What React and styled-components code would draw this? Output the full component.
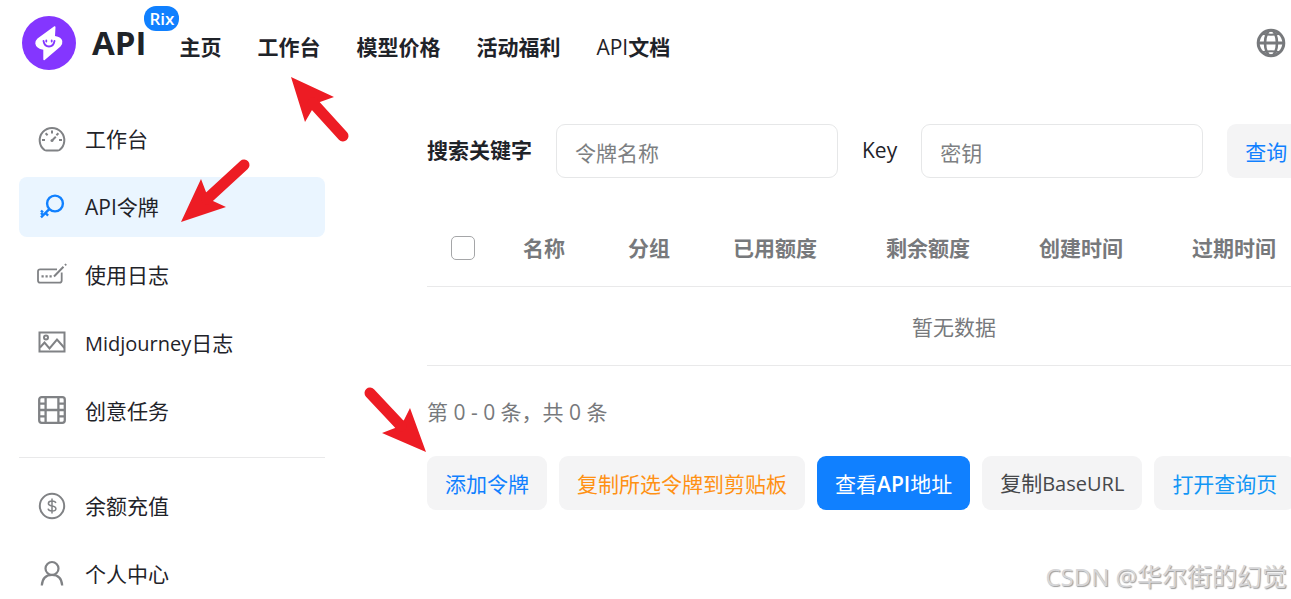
import React, { useState } from 'react'
import styled, { createGlobalStyle } from 'styled-components';

const GlobalStyle = createGlobalStyle`
    * {
        box-sizing: border-box;
    }

    body {
        margin: 0;
        background: #fff;
        color: #1f2329;
        font-family: "Open Sans", "Noto Sans CJK SC", sans-serif;
        font-size: 21px;
        line-height: 30px;
    }

    button, input {
        font: inherit;
    }
`;

const Page = styled.div`
    position: relative;
    height: 100vh;
    overflow: hidden;
`;

const Header = styled.header`
    display: flex;
    align-items: center;
    padding: 16px 5px 0 22px;
`;

const Brand = styled.a`
    position: relative;
    display: flex;
    align-items: center;
    gap: 16px;
    color: inherit;
    font-size: 33px;
    font-weight: 700;
    text-decoration: none;
`;

const Badge = styled.span`
    position: absolute;
    top: -10px;
    right: -33px;
    padding: 0 5px;
    border-radius: 12px;
    background: #1080ff;
    color: #fff;
    font-size: 17px;
    font-weight: 600;
    line-height: 25px;
`;

const Nav = styled.nav`
    display: flex;
    gap: 36px;
    flex: 1;
    padding: 8px 0 0 33px;
`;

const NavLink = styled.a`
    color: inherit;
    font-weight: 700;
    text-decoration: none;
    white-space: nowrap;
`;

const Latin = styled.span`
    font-size: ${props => props.$size || 21}px;
    font-weight: ${props => props.$weight || 400};
`;

const LangButton = styled.button`
    display: flex;
    padding: 0;
    border: 0;
    background: none;
    color: #77797c;
`;

const Body = styled.div`
    display: flex;
    gap: 102px;
    padding: 39px 0 0 19px;
`;

const Sidebar = styled.aside`
    flex: 0 0 306px;
`;

const Menu = styled.div`
    display: flex;
    flex-direction: column;
    gap: 8px;
`;

const MenuItem = styled.a`
    display: flex;
    align-items: center;
    gap: 18px;
    height: 60px;
    padding: 0 18px;
    border-radius: 8px;
    background: ${props => props.$active ? '#eaf5ff' : 'transparent'};
    color: inherit;
    text-decoration: none;

    svg {
        color: ${props => props.$active ? '#1080ff' : '#808285'};
    }
`;

const Divider = styled.hr`
    height: 1px;
    margin: 16px 0 18px;
    border: 0;
    background: #e9e9ea;
`;

const Main = styled.main`
    flex: 1;
    min-width: 0;
    padding-top: 15px;
    overflow: hidden;
`;

const SearchForm = styled.form`
    display: flex;
    align-items: center;
    gap: 24px;
    margin-bottom: 29px;
`;

const Label = styled.label`
    flex: none;
    padding-bottom: 2px;
    font-weight: ${props => props.$weight || 700};
`;

const TextInput = styled.input`
    flex: none;
    width: 282px;
    height: 54px;
    padding: 3px 18px 0;
    border: 1px solid #e6e7e8;
    border-radius: 9px;
    background: #fff;
    color: inherit;
    outline: none;

    &::placeholder {
        color: #7d7f82;
        opacity: 1;
    }
`;

const Button = styled.button`
    flex: none;
    height: 54px;
    padding: 2px 18px 0;
    border: 0;
    border-radius: 9px;
    background: ${props => props.$background || '#f4f4f5'};
    color: ${props => props.$color};
    white-space: nowrap;
`;

const Table = styled.table`
    width: 1054px;
    border-collapse: collapse;
    table-layout: fixed;
    color: #77797c;
`;

const Th = styled.th`
    width: ${props => props.$width ? props.$width + 'px' : 'auto'};
    height: 79px;
    padding: 3px 0 0 24px;
    border-bottom: 1px solid #e9e9ea;
    text-align: left;
    font-weight: 700;
`;

const Empty = styled.td`
    height: 79px;
    padding: 3px 0 0;
    border-bottom: 1px solid #e9e9ea;
    text-align: center;
`;

const Checkbox = styled.input`
    display: block;
    width: 24px;
    height: 24px;
    margin: 0;
    appearance: none;
    border: 1px solid #a5a6a8;
    border-radius: 5px;
    background: #fff;

    &:checked {
        background: #1080ff;
    }
`;

const Summary = styled.p`
    margin: 31px 0 29px;
    color: #77797c;
`;

const Actions = styled.div`
    display: flex;
    gap: 12px;
`;

const Arrow = styled.svg`
    position: absolute;
    top: ${props => props.$top}px;
    left: ${props => props.$left}px;
    overflow: visible;
    pointer-events: none;
    fill: #ed1c24;
    stroke: #ed1c24;
`;

const Watermark = styled.div`
    position: absolute;
    right: 4px;
    bottom: 6px;
    color: #d6d6d8;
    font-size: 25px;
    line-height: 32px;
    text-shadow: 1px 1px 1px #9c9c9c;
`;

function Icon(props) {
    return (
        <svg width="30" height="30" viewBox="0 0 30 30" fill="none" stroke="currentColor" strokeWidth={props.stroke || 2} aria-hidden="true">
            {props.children}
        </svg>
    )
}

function Logo() {
    return (
        <svg width="54" height="54" viewBox="0 0 54 54" aria-hidden="true">
            <circle cx="27" cy="27" r="27" fill="#8436ff" />
            <path d="M32.300 10.300 15.500 22.500Q13.300 24.500 13.300 27.500Q14 32.500 21.300 33.800L21.300 43.500Q21.700 44.700 22.700 43.900L38.500 30.500Q40.800 28 40.300 25Q39.500 21 33 20L33.500 11Q33.300 9.800 32.300 10.300Z" fill="#fff" />
            <path d="M21.500 25Q22.500 30.500 27 30.500Q31.500 30.500 32.500 25" fill="none" stroke="#8436ff" strokeWidth="1.800" strokeLinecap="round" />
            <path d="M24.300 24.500v1M29.700 24.500v1" stroke="#8436ff" strokeWidth="1.800" strokeLinecap="round" />
        </svg>
    )
}

function GaugeIcon() {
    return (
        <Icon>
            <path d="M7.500 26A12.300 12.300 0 1 1 22.500 26Q21.500 26.600 20.500 26.600H9.500Q8.500 26.600 7.500 26Z" />
            <path d="M15 6.500v3M8.600 9.200l2 2M21.400 9.200l-2 2M5 16h3M22 16h3M15.500 16l3.300-3.300" />
            <circle cx="15" cy="16.500" r="1.500" fill="currentColor" stroke="none" />
        </Icon>
    )
}

function KeyIcon() {
    return (
        <Icon stroke={2.4}>
            <circle cx="18" cy="11.500" r="7.900" />
            <path d="M12.300 17.200 4 25.400M8.500 21l2.600 2.600M6 20.500l-2-2M6.500 23.500l-2.500-2.500" />
        </Icon>
    )
}

function LogIcon() {
    return (
        <Icon stroke={1.8}>
            <path d="M20 9.300H3.200Q1 9.300 1 11.500V20.500Q1 22.700 3.200 22.700H22.500Q24.700 22.700 24.700 20.500V12.500" />
            <path d="M17 16.500 26.500 6.700M28 5.300l1.200-1.200" strokeWidth="2" />
            <path d="M4.500 16.300h2.200M8.500 16.300h2.200M12.500 16.300h2.200" strokeWidth="2.200" />
        </Icon>
    )
}

function ImageIcon() {
    return (
        <Icon>
            <path d="M2.500 4.500h25v19h-25z" />
            <circle cx="9" cy="9.500" r="2" />
            <path d="M3 19.500 7.500 14.500l5 6L20 11.500l7.500 8.500" />
        </Icon>
    )
}

function FilmIcon() {
    return (
        <Icon stroke={2.3}>
            <rect x="2.200" y="1.200" width="25.600" height="25.600" rx="2.500" />
            <path d="M8.600 1.500v25M21.400 1.500v25M8.600 14h12.800M2.500 7.600h6M2.500 14h6M2.500 20.400h6M21.400 7.600h6M21.400 14h6M21.400 20.400h6" />
        </Icon>
    )
}

function CoinIcon() {
    return (
        <Icon stroke={2}>
            <circle cx="15" cy="15" r="12.200" />
            <path d="M18.800 12Q18.400 10 15 10Q11.400 10 11.400 12.400Q11.400 14.300 15 14.900Q18.900 15.500 18.900 17.700Q18.900 20 15 20Q11.400 20 11.100 17.700M15 7.500v15" strokeWidth="1.500" />
        </Icon>
    )
}

function UserIcon() {
    return (
        <Icon stroke={2.2}>
            <circle cx="15" cy="9.500" r="6.500" />
            <path d="M4.800 26.500Q5.500 15.800 15 15.800Q24.500 15.800 25.200 26.500" />
        </Icon>
    )
}

function GlobeIcon() {
    return (
        <Icon stroke={3}>
            <circle cx="15" cy="15" r="12.800" />
            <ellipse cx="15" cy="15" rx="6" ry="12.800" strokeWidth="2.600" />
            <path d="M2 15h26" />
            <path d="M6 5.800Q15 7.500 24 5.800M6 24.200Q15 22.500 24 24.200" strokeWidth="2" />
        </Icon>
    )
}

const menu = [
    { name: '工作台', icon: <GaugeIcon /> },
    { name: 'API令牌', icon: <KeyIcon /> },
    { name: '使用日志', icon: <LogIcon /> },
    { name: '日志', prefix: 'Midjourney', icon: <ImageIcon /> },
    { name: '创意任务', icon: <FilmIcon /> }
]

const accountMenu = [
    { name: '余额充值', icon: <CoinIcon /> },
    { name: '个人中心', icon: <UserIcon /> }
]

const columns = [
    { name: '名称', width: 105 },
    { name: '分组', width: 105 },
    { name: '已用额度', width: 153 },
    { name: '剩余额度', width: 153 },
    { name: '创建时间', width: 153 },
    { name: '过期时间' }
]

function App() {

    const [active, setActive] = useState('API令牌')
    const [all, setAll] = useState(false)

    function getItems(items) {
        return items.map(item => (
            <MenuItem href="#" key={item.name} $active={item.name === active} onClick={() => setActive(item.name)}>
                {item.icon}
                <span>{item.prefix && <Latin $size={20}>{item.prefix}</Latin>}{item.name}</span>
            </MenuItem>
        ))
    }

    return (
        <Page lang="zh-CN">
            <GlobalStyle />
            <Header>
                <Brand href="#">
                    <Logo />
                    <span>API</span>
                    <Badge>Rix</Badge>
                </Brand>
                <Nav>
                    <NavLink href="#">主页</NavLink>
                    <NavLink href="#">工作台</NavLink>
                    <NavLink href="#">模型价格</NavLink>
                    <NavLink href="#">活动福利</NavLink>
                    <NavLink href="#"><Latin $weight={500}>API</Latin>文档</NavLink>
                </Nav>
                <LangButton type="button" aria-label="语言"><GlobeIcon /></LangButton>
            </Header>
            <Body>
                <Sidebar>
                    <Menu>{getItems(menu)}</Menu>
                    <Divider />
                    <Menu>{getItems(accountMenu)}</Menu>
                </Sidebar>
                <Main>
                    <SearchForm onSubmit={e => e.preventDefault()}>
                        <Label htmlFor="keyword">搜索关键字</Label>
                        <TextInput id="keyword" placeholder="令牌名称" />
                        <Label htmlFor="key" $weight={500}>Key</Label>
                        <TextInput id="key" placeholder="密钥" />
                        <Button $color="#1080ff">查询</Button>
                    </SearchForm>
                    <Table>
                        <thead>
                            <tr>
                                <Th $width={72}>
                                    <Checkbox type="checkbox" aria-label="全选" checked={all} onChange={() => setAll(!all)} />
                                </Th>
                                {columns.map(column => (
                                    <Th key={column.name} $width={column.width}>{column.name}</Th>
                                ))}
                            </tr>
                        </thead>
                        <tbody>
                            <tr>
                                <Empty colSpan={columns.length + 1}>暂无数据</Empty>
                            </tr>
                        </tbody>
                    </Table>
                    <Summary>第 0 - 0 条，共 0 条</Summary>
                    <Actions>
                        <Button type="button" $color="#1080ff">添加令牌</Button>
                        <Button type="button" $color="#ff9114">复制所选令牌到剪贴板</Button>
                        <Button type="button" $color="#fff" $background="#1080ff">查看<Latin $weight={600}>API</Latin>地址</Button>
                        <Button type="button" $color="#46484b">复制<Latin $size={20} $weight={500}>BaseURL</Latin></Button>
                        <Button type="button" $color="#1296f5">打开查询页</Button>
                    </Actions>
                </Main>
            </Body>
            <Arrow $top={77} $left={291} width="58" height="65" aria-hidden="true">
                <path d="M0 0 43 20 29 25 21 33 14 45Z" stroke="none" />
                <path d="M22 26 52 59" strokeWidth="11" strokeLinecap="round" />
            </Arrow>
            <Arrow $top={159} $left={181} width="69" height="63" aria-hidden="true">
                <path d="M0 63 20 20 25 33 32 42 45 48Z" stroke="none" />
                <path d="M26 40 63 6" strokeWidth="11" strokeLinecap="round" />
            </Arrow>
            <Arrow $top={387} $left={364} width="62" height="65" aria-hidden="true">
                <path d="M62 65 46 21 40 33 31 41 18 46Z" stroke="none" />
                <path d="M37 39 6 6" strokeWidth="11" strokeLinecap="round" />
            </Arrow>
            <Watermark><Latin $size={24}>CSDN @</Latin>华尔街的幻觉</Watermark>
        </Page>
    )

}

export default App
